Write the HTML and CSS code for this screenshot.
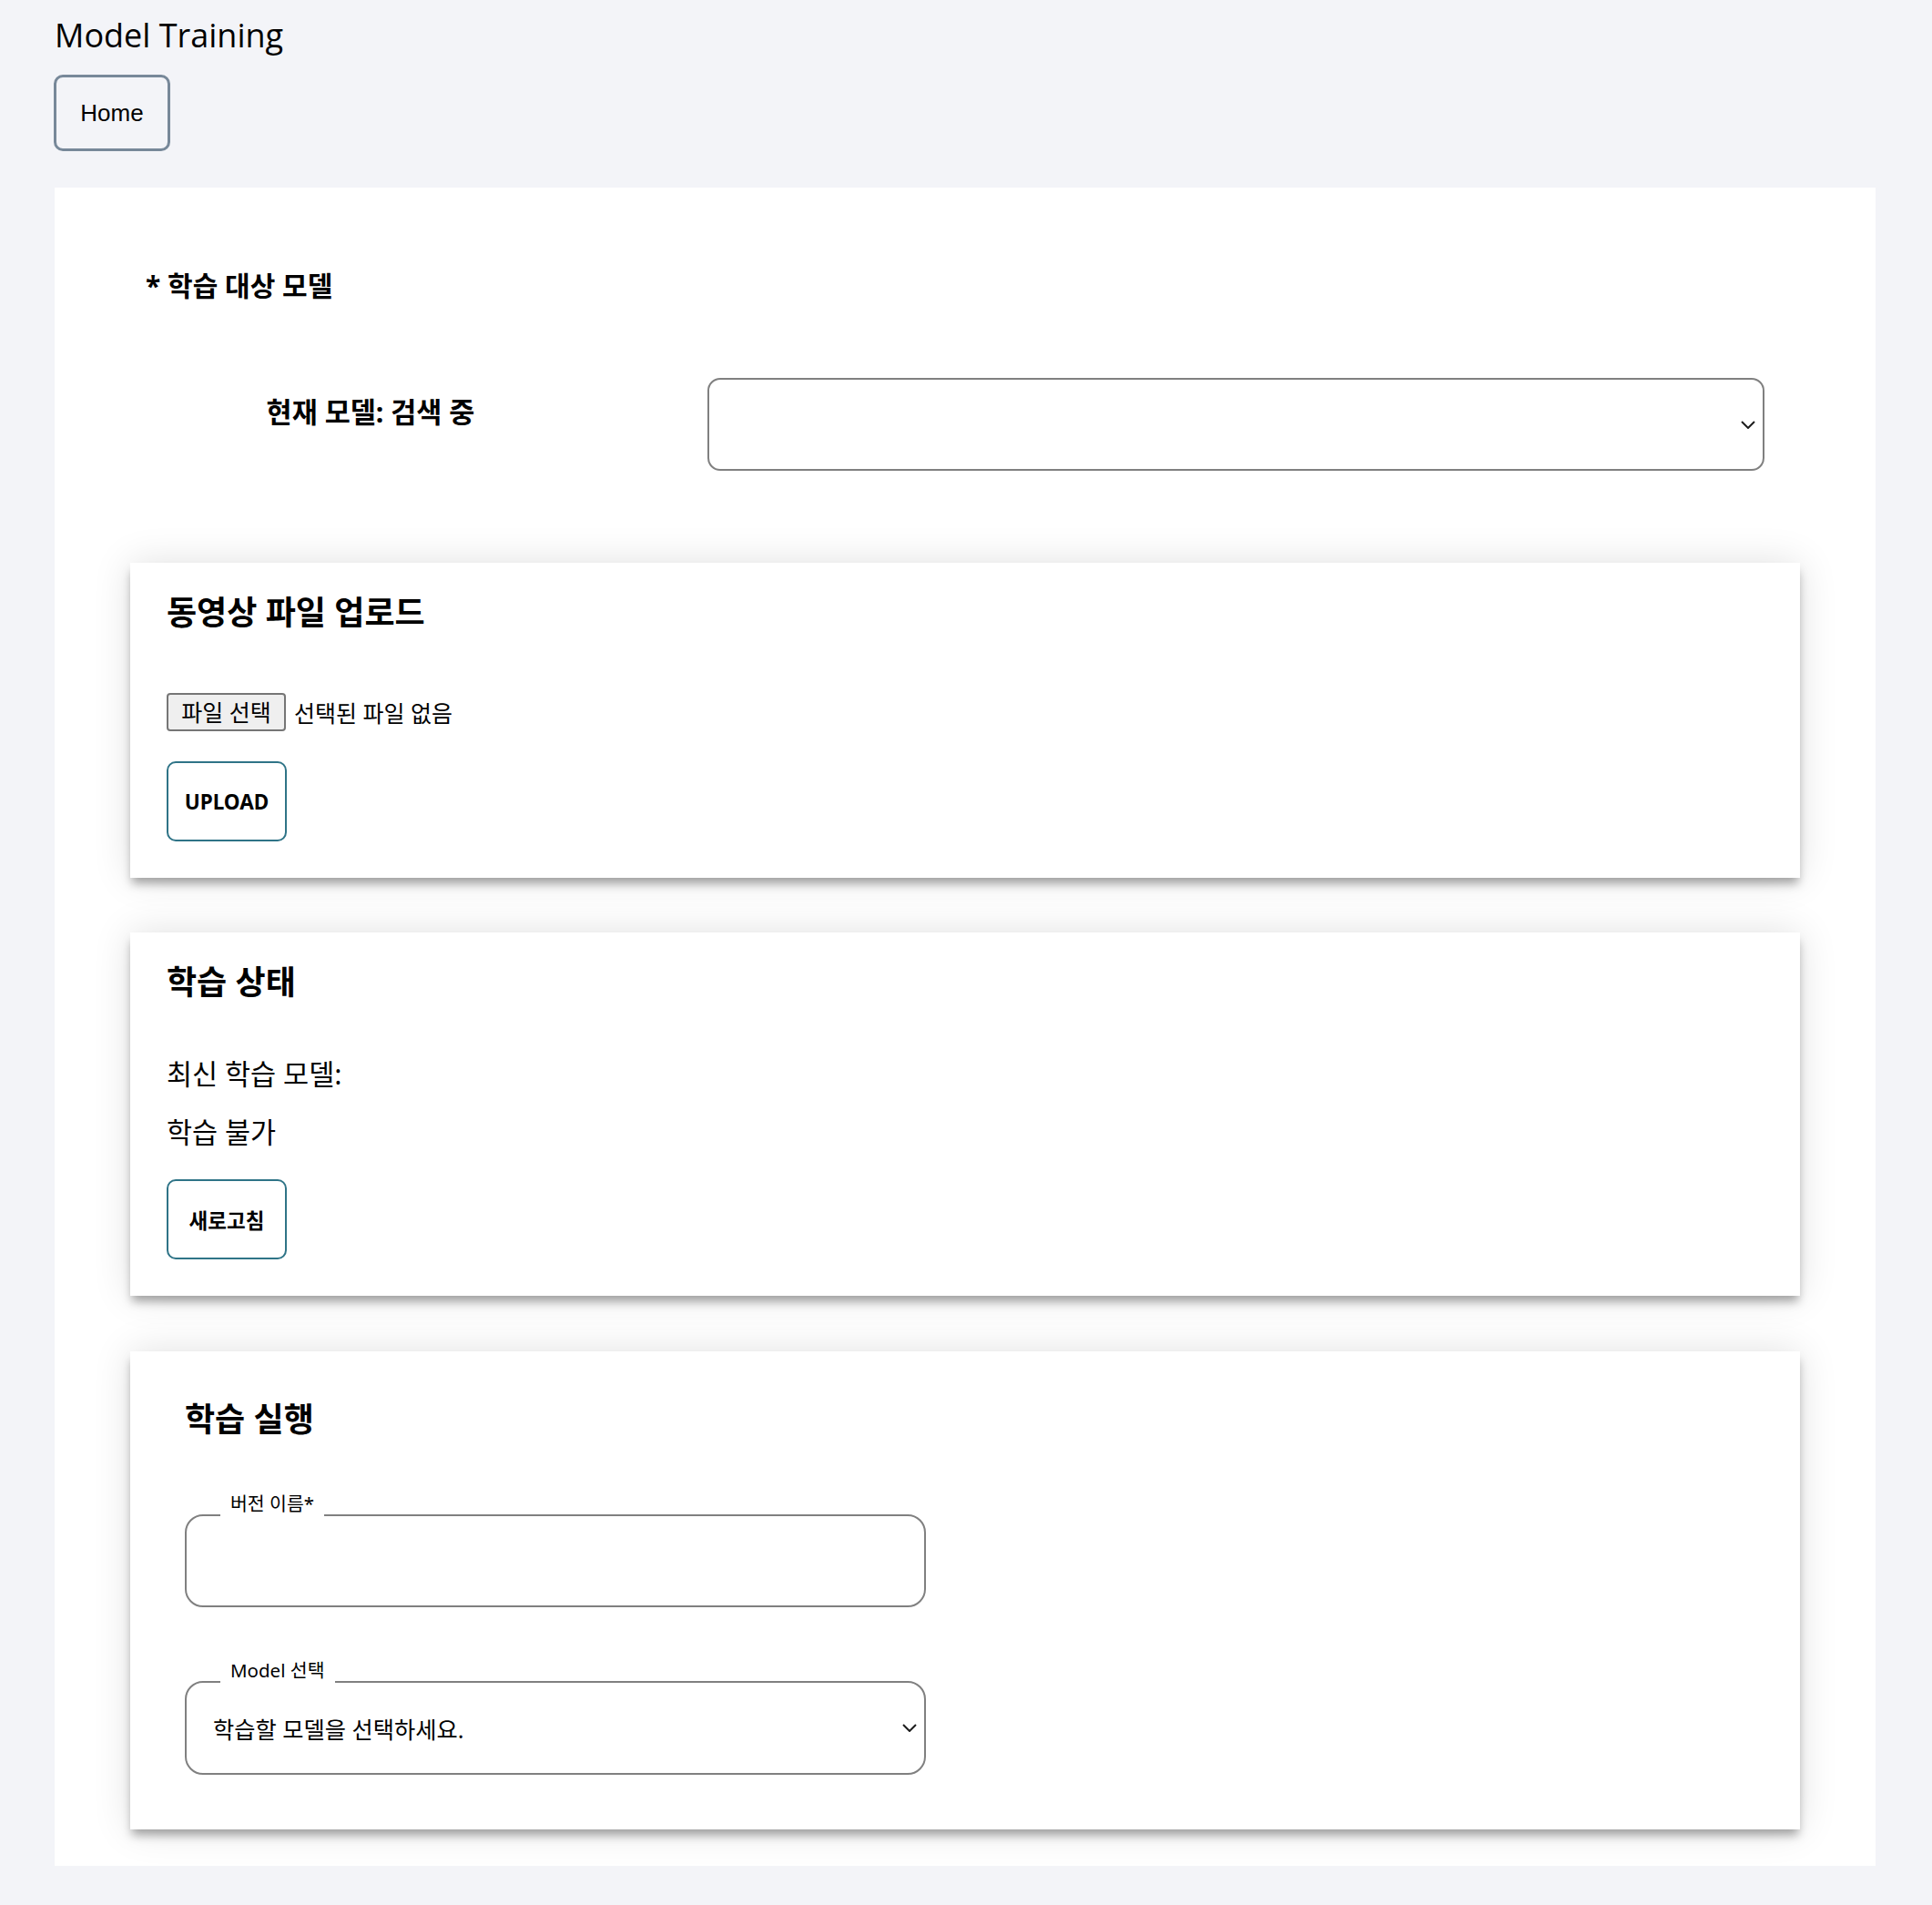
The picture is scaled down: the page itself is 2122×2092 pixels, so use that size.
FILE: index.html
```
<!DOCTYPE html>
<html lang="ko">
<head>
    <meta charset="UTF-8">
    <meta name="viewport" content="width=device-width, initial-scale=1.0">
    <title>Model Training</title>
    <link rel="stylesheet" href="styles.css">
</head>
<body>
    <div class="page">
        <h1 class="page-title">Model Training</h1>
        <button class="home-button">Home</button>

        <main class="panel">
            <h3 class="target-label">* 학습 대상 모델</h3>
            <div class="model-row">
                <div class="current-model">현재 모델: 검색 중</div>
                <div class="select select-current">
                    <span class="select-value"></span>
                    <svg class="chevron" width="16" height="9" viewBox="0 0 16 9"><polyline points="1,1 8,8 15,1"/></svg>
                </div>
            </div>

            <section class="card">
                <h2>동영상 파일 업로드</h2>
                <label class="file-row">
                    <span class="file-button">파일 선택</span>
                    <span class="file-name">선택된 파일 없음</span>
                    <input type="file" class="file-input">
                </label>
                <button class="outline-button">UPLOAD</button>
            </section>

            <section class="card">
                <h2>학습 상태</h2>
                <p>최신 학습 모델:</p>
                <p>학습 불가</p>
                <button class="outline-button">새로고침</button>
            </section>

            <section class="card card-train">
                <h2>학습 실행</h2>
                <div class="field">
                    <span class="field-label">버전 이름*</span>
                    <input type="text" class="field-input">
                </div>
                <div class="field select select-model">
                    <span class="field-label">Model 선택</span>
                    <span class="select-value">학습할 모델을 선택하세요.</span>
                    <svg class="chevron" width="16" height="9" viewBox="0 0 16 9"><polyline points="1,1 8,8 15,1"/></svg>
                </div>
            </section>
        </main>
    </div>
</body>
</html>
```

FILE: styles.css
```
body {
    margin: 0;
    padding: 0;
    background-color: #f3f4f8;
    color: #000;
    font-family: "Noto Sans", "Noto Sans CJK KR", sans-serif;
}

.page {
    padding: 0 62px 44px 60px;
}

.page-title {
    margin: 14px 0 19px;
    font-family: "Open Sans", "Noto Sans CJK KR", sans-serif;
    font-size: 36px;
    font-weight: 400;
    line-height: 49px;
}

.home-button {
    display: block;
    box-sizing: border-box;
    width: 128px;
    height: 84px;
    margin-left: -1px;
    background: transparent;
    border: 3px solid #778899;
    border-radius: 10px;
    font-family: "Liberation Sans", Arial, sans-serif;
    font-size: 26px;
    color: #000;
    cursor: pointer;
}

.panel {
    display: block;
    margin-top: 40px;
    padding: 90px 83px 40px;
    background-color: #fff;
}

.target-label {
    margin: 0 0 0 17px;
    font-size: 30px;
    font-weight: 700;
    line-height: 35px;
}

.model-row {
    display: grid;
    grid-template-columns: 528px 1fr;
    column-gap: 106px;
    align-items: start;
    margin: 84px 39px 0 0;
}

.current-model {
    margin-top: 20px;
    text-align: center;
    font-size: 30.5px;
    font-weight: 700;
    line-height: 35px;
}

/* select boxes */
.select {
    display: flex;
    align-items: center;
    justify-content: space-between;
    box-sizing: border-box;
    border: 2px solid #808080;
    cursor: pointer;
}

.select-current {
    height: 102px;
    border-radius: 14px;
    padding: 0 8px 0 29px;
}

.chevron {
    flex-shrink: 0;
    fill: none;
    stroke: #1d1d1d;
    stroke-width: 2;
}

/* cards */
.card {
    margin-top: 60px;
    padding: 37px 40px 40px;
    background-color: #fff;
    box-shadow: 0 8px 10px -2px rgba(0, 0, 0, 0.34),
                0 0 40px rgba(0, 0, 0, 0.12);
}

.model-row + .card {
    margin-top: 101px;
}

.card h2 {
    margin: 0 0 61px;
    font-size: 36px;
    font-weight: 700;
    line-height: 36px;
}

.card p {
    margin: 0 0 22px;
    font-size: 30.5px;
    line-height: 42px;
}

.file-row {
    display: flex;
    align-items: center;
    gap: 9px;
    margin-top: 70px;
    font-size: 25px;
    cursor: pointer;
}

.file-button {
    box-sizing: border-box;
    width: 131px;
    height: 42px;
    line-height: 38px;
    text-align: center;
    background-color: #efefef;
    border: 2px solid #767676;
    border-radius: 4px;
}

.file-input {
    display: none;
}

.outline-button {
    display: block;
    box-sizing: border-box;
    width: 132px;
    height: 88px;
    margin-top: 33px;
    background-color: #fff;
    border: 2px solid #2f7487;
    border-radius: 10px;
    font-family: "Noto Sans", "Noto Sans CJK KR", sans-serif;
    font-size: 22.5px;
    font-weight: 700;
    color: #000;
    cursor: pointer;
}

.card p + .outline-button {
    margin-top: 31px;
}

/* training form */
.card-train {
    margin-top: 61px;
    padding: 57px 60px 60px;
}

.card-train h2 {
    margin-bottom: 86px;
}

.field {
    position: relative;
    box-sizing: border-box;
    width: 814px;
    height: 102px;
    border: 2px solid #808080;
    border-radius: 20px;
}

.field-label {
    position: absolute;
    top: -26px;
    left: 37px;
    padding: 0 11px 4px;
    background-color: #fff;
    font-size: 20.5px;
    line-height: 24px;
}

.field-input {
    box-sizing: border-box;
    width: 100%;
    height: 100%;
    padding: 0 29px;
    border: none;
    border-radius: 20px;
    background: transparent;
    font-family: inherit;
    font-size: 25px;
    outline: none;
}

.select-model {
    height: 103px;
    margin-top: 81px;
    padding: 0 8px 0 29px;
}

.select-model .select-value {
    font-size: 25.25px;
}
```
